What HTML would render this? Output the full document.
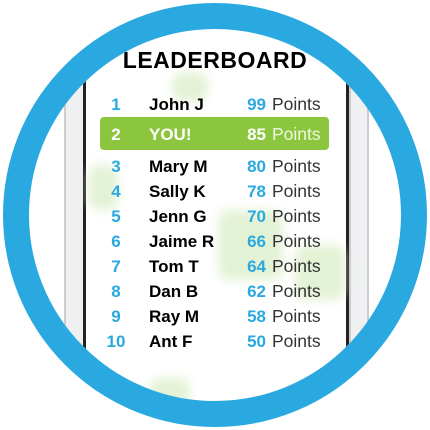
<!DOCTYPE html>
<html><head><style>
body{margin:0;width:430px;height:430px;background:#fff;position:relative;overflow:hidden;font-family:"Liberation Sans",sans-serif}
.clip{position:absolute;left:29px;top:29px;width:372px;height:372px;border-radius:50%;overflow:hidden;background:#fff}
.in{position:absolute;left:-29px;top:-29px;width:430px;height:430px}
.ring{position:absolute;left:3px;top:3px;width:372px;height:372px;border:26px solid #2aa9e0;border-radius:50%}
.bz{position:absolute;top:80px;height:360px;background:#eff0f2;border-left:2px solid #ccc;border-right:2px solid #ccc}
.blk{position:absolute;top:80px;height:360px;width:3px;background:#222}
.blob{position:absolute;background:#d8ecc4;filter:blur(5px);border-radius:12px;opacity:.7}
.t{position:absolute;left:0;width:430px;top:47px;text-align:center;font-weight:bold;font-size:23px;letter-spacing:.5px;color:#000}
.r{position:absolute;height:25px;line-height:25px;font-size:17px;left:0;width:430px}
.n{position:absolute;left:100px;width:32px;text-align:center;color:#2aa9e0;font-weight:bold}
.nm{position:absolute;left:149px;font-weight:bold;color:#000}
.p{position:absolute;right:164px;color:#2aa9e0;font-weight:bold}
.pt{position:absolute;left:272px;color:#333;font-size:17.5px}
.g{position:absolute;left:100px;top:117px;width:229px;height:33px;background:#8cc63f;border-radius:4px}
.you .n,.you .nm,.you .p{color:#fff}
.you .pt{color:#eef7e0}
</style></head><body>
<div class="clip"><div class="in">
<div class="bz" style="left:64px;width:18px"></div>
<div class="bz" style="left:349px;width:16px"></div>
<div class="blk" style="left:83px"></div>
<div class="blk" style="left:346px"></div>
<div class="blob" style="left:172px;top:72px;width:36px;height:30px"></div>
<div class="blob" style="left:88px;top:165px;width:30px;height:45px"></div>
<div class="blob" style="left:218px;top:210px;width:65px;height:70px"></div>
<div class="blob" style="left:295px;top:245px;width:50px;height:55px"></div>
<div class="blob" style="left:150px;top:378px;width:40px;height:30px"></div>
<div class="t">LEADERBOARD</div>
<div class="g"></div>
<div class="r" style="top:92px"><span class="n">1</span><span class="nm">John J</span><span class="p">99</span><span class="pt">Points</span></div>
<div class="r you" style="top:122px"><span class="n">2</span><span class="nm">YOU!</span><span class="p">85</span><span class="pt">Points</span></div>
<div class="r" style="top:154px"><span class="n">3</span><span class="nm">Mary M</span><span class="p">80</span><span class="pt">Points</span></div>
<div class="r" style="top:179px"><span class="n">4</span><span class="nm">Sally K</span><span class="p">78</span><span class="pt">Points</span></div>
<div class="r" style="top:204px"><span class="n">5</span><span class="nm">Jenn G</span><span class="p">70</span><span class="pt">Points</span></div>
<div class="r" style="top:229px"><span class="n">6</span><span class="nm">Jaime R</span><span class="p">66</span><span class="pt">Points</span></div>
<div class="r" style="top:254px"><span class="n">7</span><span class="nm">Tom T</span><span class="p">64</span><span class="pt">Points</span></div>
<div class="r" style="top:279px"><span class="n">8</span><span class="nm">Dan B</span><span class="p">62</span><span class="pt">Points</span></div>
<div class="r" style="top:304px"><span class="n">9</span><span class="nm">Ray M</span><span class="p">58</span><span class="pt">Points</span></div>
<div class="r" style="top:329px"><span class="n">10</span><span class="nm">Ant F</span><span class="p">50</span><span class="pt">Points</span></div>
</div></div>
<div class="ring"></div>
</body></html>
